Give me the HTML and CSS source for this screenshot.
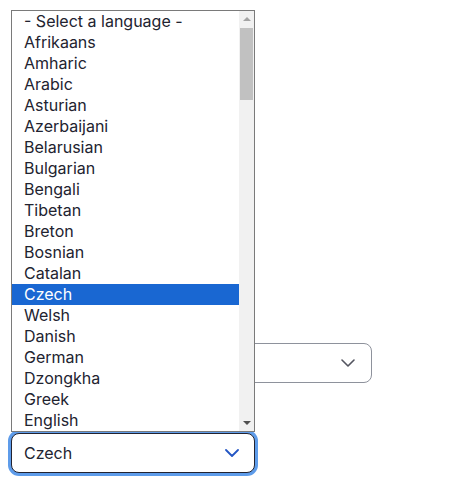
FILE: index.html
```html
<!DOCTYPE html>
<html lang="en">
<head>
<meta charset="utf-8">
<title>Language select</title>
<link rel="stylesheet" href="styles.css">
</head>
<body>
<div class="page">
  <div class="form">
    <div class="select select-back">
      <span class="value"></span>
      <svg class="chev" width="14" height="8" viewBox="0 0 14 8"><path d="M1 1l6 6 6-6" fill="none" stroke="currentColor" stroke-width="1.6" stroke-linecap="round" stroke-linejoin="round"/></svg>
    </div>
    <div class="select select-front">
      <span class="value">Czech</span>
      <svg class="chev" width="14" height="8" viewBox="0 0 14 8"><path d="M1 1l6 6 6-6" fill="none" stroke="currentColor" stroke-width="1.8" stroke-linecap="round" stroke-linejoin="round"/></svg>
    </div>
  </div>
  <div class="popup">
    <ul class="options">
      <li>- Select a language -</li>
      <li>Afrikaans</li>
      <li>Amharic</li>
      <li>Arabic</li>
      <li>Asturian</li>
      <li>Azerbaijani</li>
      <li>Belarusian</li>
      <li>Bulgarian</li>
      <li>Bengali</li>
      <li>Tibetan</li>
      <li>Breton</li>
      <li>Bosnian</li>
      <li>Catalan</li>
      <li class="selected">Czech</li>
      <li>Welsh</li>
      <li>Danish</li>
      <li>German</li>
      <li>Dzongkha</li>
      <li>Greek</li>
      <li>English</li>
    </ul>
    <div class="scrollbar">
      <span class="arrow up"></span>
      <span class="thumb"></span>
      <span class="arrow down"></span>
    </div>
  </div>
</div>
</body>
</html>
```
FILE: styles.css
```css
html, body {
  margin: 0;
  padding: 0;
  background: #fff;
}
body {
  font-family: Inter, "Noto Sans", sans-serif;
  color: #222330;
}
.page {
  position: relative;
  width: 472px;
  height: 489px;
}
.form {
  padding: 343px 0 0 11px;
  display: flex;
  flex-direction: column;
  gap: 50px;
}
.select {
  box-sizing: border-box;
  display: flex;
  align-items: center;
  justify-content: space-between;
  background: #fff;
  border-radius: 8px;
}
.select-back {
  width: 361px;
  height: 40px;
  border: 1px solid #8e929c;
  padding: 0 16px 0 13px;
  color: #545560;
}
.select-front {
  width: 244px;
  height: 40px;
  border: 1px solid #222330;
  padding: 0 15px 0 12px;
  box-shadow: 0 0 0 3px #5e9cea;
  font-size: 16px;
  color: #222330;
}
.select-front .chev {
  color: #2456c4;
}
.popup {
  position: absolute;
  left: 11px;
  top: 10px;
  width: 244px;
  height: 422px;
  box-sizing: border-box;
  border: 1px solid #7a7a7a;
  background: #fff;
  display: flex;
}
.options {
  list-style: none;
  margin: 0;
  padding: 0;
  flex: 1;
  font-size: 16px;
}
.options li {
  height: 21px;
  line-height: 21px;
  padding-left: 12px;
  white-space: nowrap;
  color: #222330;
}
.options li.selected {
  background: #1967d2;
  color: #fff;
}
.scrollbar {
  width: 15px;
  background: #f1f1f1;
  display: flex;
  flex-direction: column;
  align-items: center;
}
.arrow {
  width: 0;
  height: 0;
  border-left: 4px solid transparent;
  border-right: 4px solid transparent;
}
.arrow.up {
  margin-top: 6px;
  border-bottom: 4px solid #a3a3a3;
}
.arrow.down {
  margin-top: auto;
  margin-bottom: 6px;
  border-top: 4px solid #505050;
}
.thumb {
  width: 13px;
  height: 72px;
  margin-top: 7px;
  background: #c1c1c1;
}
```
